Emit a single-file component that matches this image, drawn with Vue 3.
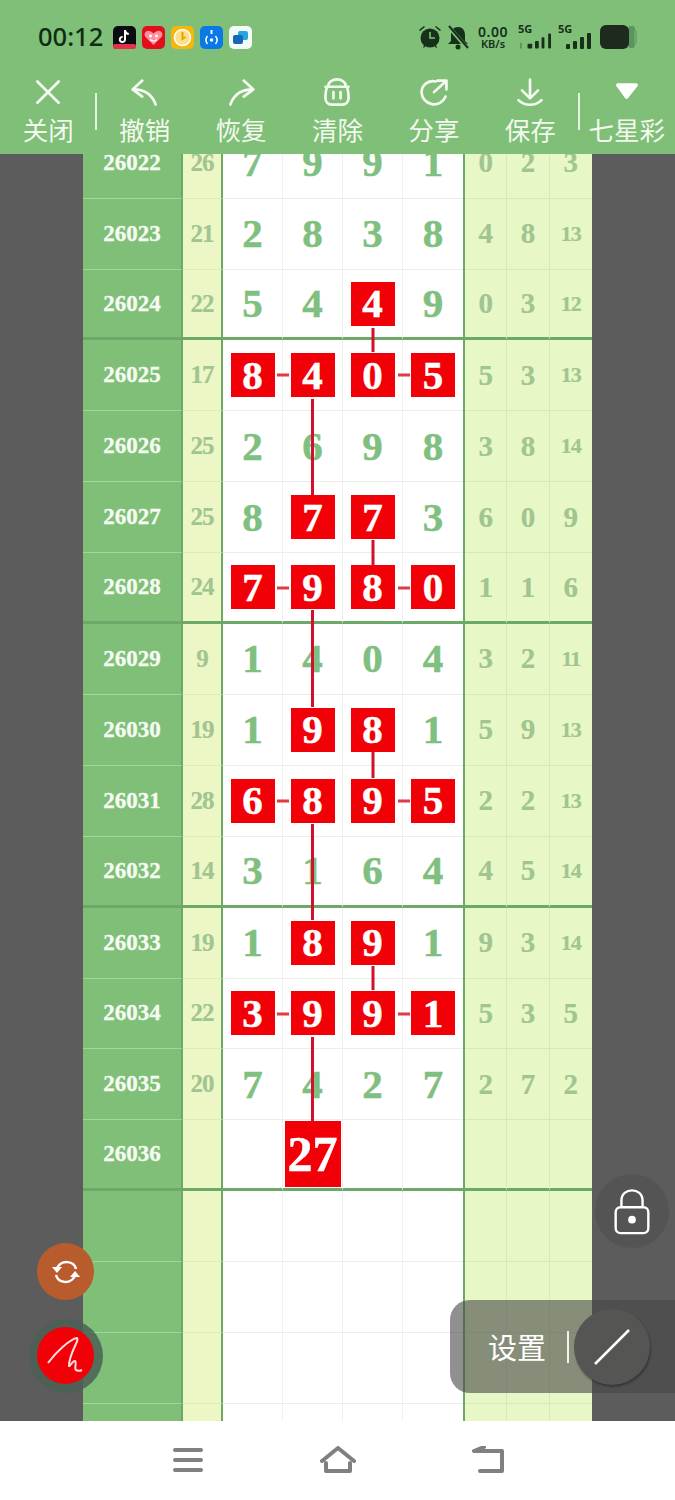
<script setup>
const R = (n) => ({ n, red: true })
const rows = [
  { id: 26022, sum: 26, d: [7, 9, 9, 1], r: [0, 2, 3] },
  { id: 26023, sum: 21, d: [2, 8, 3, 8], r: [4, 8, 13] },
  { id: 26024, sum: 22, d: [5, 4, R(4), 9], r: [0, 3, 12], thick: true },
  { id: 26025, sum: 17, d: [R(8), R(4), R(0), R(5)], r: [5, 3, 13] },
  { id: 26026, sum: 25, d: [2, 6, 9, 8], r: [3, 8, 14] },
  { id: 26027, sum: 25, d: [8, R(7), R(7), 3], r: [6, 0, 9] },
  { id: 26028, sum: 24, d: [R(7), R(9), R(8), R(0)], r: [1, 1, 6], thick: true },
  { id: 26029, sum: 9, d: [1, 4, 0, 4], r: [3, 2, 11] },
  { id: 26030, sum: 19, d: [1, R(9), R(8), 1], r: [5, 9, 13] },
  { id: 26031, sum: 28, d: [R(6), R(8), R(9), R(5)], r: [2, 2, 13] },
  { id: 26032, sum: 14, d: [3, 1, 6, 4], r: [4, 5, 14], thick: true },
  { id: 26033, sum: 19, d: [1, R(8), R(9), 1], r: [9, 3, 14] },
  { id: 26034, sum: 22, d: [R(3), R(9), R(9), R(1)], r: [5, 3, 5] },
  { id: 26035, sum: 20, d: [7, 4, 2, 7], r: [2, 7, 2] },
  { id: 26036, sum: '', d: ['', { n: 27, big: true }, '', ''], r: ['', '', ''], thick: true },
  { id: '', sum: '', d: ['', '', '', ''], r: ['', '', ''] },
  { id: '', sum: '', d: ['', '', '', ''], r: ['', '', ''] },
  { id: '', sum: '', d: ['', '', '', ''], r: ['', '', ''] },
  { id: '', sum: '', d: ['', '', '', ''], r: ['', '', ''] },
]
const isObj = (v) => typeof v === 'object' && v !== null
const val = (v) => (isObj(v) ? v.n : v)
const tools = ['关闭', '撤销', '恢复', '清除', '分享', '保存', '七星彩']
</script>

<template>
  <div class="page">
    <header class="head">
      <div class="status">
        <span class="time">00:12</span>
        <div class="apps">
          <svg width="23" height="23" viewBox="0 0 23 23"><rect width="23" height="23" rx="5" fill="#0b0b12"/><rect y="18" width="23" height="5" rx="2" fill="#e8304a"/><path d="M12 4v9.500a2.600 2.600 0 1 1-2.400-2.600M12 4.500c.4 2 1.800 3.300 3.800 3.500" fill="none" stroke="#fff" stroke-width="2"/></svg>
          <svg width="23" height="23" viewBox="0 0 23 23"><rect width="23" height="23" rx="5" fill="#e30d1b"/><path d="M11.500 19 3.500 11c-2.500-3 .5-7 4-6 1.800.5 3 1.500 4 2.500 1-1 2.200-2 4-2.500 3.500-1 6.500 3 4 6z" fill="#ff8d9c"/><circle cx="8.500" cy="10" r="1.500" fill="#fff"/><circle cx="14.500" cy="10" r="1.500" fill="#fff"/><path d="M8 13.500c2 2 5 2 7 0" stroke="#fff" stroke-width="1.500" fill="none"/></svg>
          <svg width="23" height="23" viewBox="0 0 23 23"><rect width="23" height="23" rx="5" fill="#f6b60e"/><circle cx="11.500" cy="11.500" r="8" fill="#fbe08a" stroke="#fff" stroke-width="1.500"/><path d="M11.500 6v7l3-2" stroke="#e9a400" stroke-width="2" fill="none"/></svg>
          <svg width="23" height="23" viewBox="0 0 23 23"><rect width="23" height="23" rx="5" fill="#0a78e6"/><path d="M11.500 4v4" stroke="#fff" stroke-width="2"/><circle cx="11.500" cy="14" r="1.800" fill="#fff"/><path d="M7.500 10c-2 2.500-2 5.500 0 8M15.500 10c2 2.500 2 5.500 0 8" stroke="#fff" stroke-width="1.500" fill="none"/></svg>
          <svg width="23" height="23" viewBox="0 0 23 23"><rect width="23" height="23" rx="5" fill="#f2fbf7"/><rect x="9" y="5" width="10" height="9" rx="2" fill="#25a6df"/><rect x="4" y="9" width="10" height="9" rx="2" fill="#1567b8"/></svg>
        </div>
        <div class="sys">
          <svg width="26" height="26" viewBox="0 0 26 26" fill="#16301a"><circle cx="13" cy="14" r="9.500"/><path d="M2 6l5-4 1 1-5 4zM24 6l-5-4-1 1 5 4z"/><path d="M13 8v6h5" stroke="#7fbf78" stroke-width="1.600" fill="none"/><path d="M6 23l2-3 1 1-2 3zM20 23l-2-3-1 1 2 3z"/></svg>
          <svg width="24" height="25" viewBox="0 0 24 25" fill="#16301a"><path d="M12 2c4.500 0 7 3.500 7 8v6l3 3H2l3-3v-6c0-4.500 2.500-8 7-8z"/><circle cx="12" cy="22" r="2.500"/><path d="M2 1l20 23" stroke="#7fbf78" stroke-width="4"/><path d="M3 1l19 22" stroke="#16301a" stroke-width="2"/></svg>
          <div class="speed"><b>0.00</b><span>KB/s</span></div>
          <div class="net">
            <b>5G</b>
            <svg width="31" height="16" viewBox="0 0 33 16" fill="#16301a"><rect x="0" y="10" width="2" height="6" opacity=".3"/><rect x="8" y="11" width="5" height="5" rx="1"/><rect x="16" y="8" width="4" height="8" rx="1"/><rect x="23" y="4" width="3" height="12" rx="1"/><rect x="30" y="0" width="3" height="16" rx="1"/></svg>
          </div>
          <div class="net net2">
            <b>5G</b>
            <svg width="26" height="16" viewBox="0 0 26 16" fill="#16301a"><rect x="0" y="11" width="4" height="5" rx="1"/><rect x="7" y="8" width="4" height="8" rx="1"/><rect x="14" y="4" width="4" height="12" rx="1"/><rect x="21" y="0" width="4" height="16" rx="1"/></svg>
          </div>
          <svg width="39" height="24" viewBox="0 0 39 24"><rect x="29" y="1" width="7" height="22" rx="3" fill="#5c9460"/><rect x="35" y="5" width="3" height="14" rx="1.500" fill="#6ea66c"/><rect x="1" y="0" width="29" height="24" rx="6" fill="#1d2a1d"/></svg>
        </div>
      </div>
      <nav class="tools">
        <div v-for="(t, i) in tools" :key="t" class="tool" :class="{ sep: i === 0 || i === 5 }">
          <svg v-if="i === 0" class="ic" viewBox="0 0 36 36"><path d="M6 5l24 24M30 5L6 29"/></svg>
          <svg v-else-if="i === 1" class="ic" viewBox="0 0 36 36"><path d="M15 4L4 14l11 8M5 14c12 0 21 6 25 17"/></svg>
          <svg v-else-if="i === 2" class="ic" viewBox="0 0 36 36"><path d="M21 4l11 10-11 8M31 14C19 14 10 20 6 31"/></svg>
          <svg v-else-if="i === 3" class="ic" viewBox="0 0 36 36"><path d="M8 11c0-11 20-11 20 0M5 11h26M7 11c-2 4-2 10-2 13 0 4 3 7 7 7h12c4 0 7-3 7-7 0-3 0-9-2-13M14 17v7M22 17v7"/></svg>
          <svg v-else-if="i === 4" class="ic" viewBox="0 0 36 36"><path d="M20 5C10 3 4 11 4 17a14 14 0 0 0 27 5M18 17L31 5M22 4h10v10"/></svg>
          <svg v-else-if="i === 5" class="ic" viewBox="0 0 36 36"><path d="M18 3v20M9 15l9 9 9-9M5 26c7 7 19 7 26 0"/></svg>
          <svg v-else class="ic" viewBox="0 0 36 36"><path class="fill" d="M8 7h20c2 0 3 2 2 3L19 24c-1 1-2 1-3 0L6 10c-1-1 0-3 2-3z"/></svg>
          <span>{{ t }}</span>
        </div>
      </nav>
    </header>

    <main class="main">
      <div class="table">
        <div v-for="(row, ri) in rows" :key="ri" class="row" :class="{ thick: row.thick }">
          <div class="c-date">{{ row.id }}</div>
          <div class="c-sum">{{ row.sum }}</div>
          <div class="c-digits">
            <div v-for="(v, di) in row.d" :key="di" class="digit">
              <span :class="{ box: isObj(v) && v.red, big: isObj(v) && v.big }">{{ val(v) }}</span>
            </div>
          </div>
          <div class="c-right">
            <div v-for="(v, di) in row.r" :key="di" class="rcell" :class="{ two: v >= 10 }">{{ v }}</div>
          </div>
        </div>
      </div>
    </main>

    <svg class="links" width="675" height="1500" viewBox="0 0 675 1500">
      <path d="M373 328v24M312.500 399v96M373 540v25M312.500 610v97M373 752v26M312.500 824v96M373 966v24M312.500 1037v85" />
      <path d="M277 375h12M398 375h12M277 588h12M398 588h12M277 801h12M398 801h12M277 1014h12M398 1014h12" />
    </svg>

    <footer class="nav">
      <svg width="30" height="26" viewBox="0 0 30 26"><path d="M2 3h26M2 13h26M2 23h26"/></svg>
      <svg width="36" height="28" viewBox="0 0 36 28"><path d="M2 15L18 2l16 13M6 17v8h24v-8"/></svg>
      <svg width="32" height="28" viewBox="0 0 32 28"><path d="M12 1L2 5h28v20H8"/></svg>
    </footer>

    <div class="fab lock">
      <svg width="38" height="48" viewBox="0 0 38 48"><path d="M8 18v-6c0-14 22-14 22 0v6" fill="none" stroke="#fff" stroke-width="2.500"/><rect x="2" y="19" width="34" height="27" rx="5" fill="none" stroke="#fff" stroke-width="2.500"/><circle cx="19" cy="32" r="4" fill="#fff"/></svg>
    </div>
    <div class="setting">
      <span class="s-txt">设置</span>
      <i class="s-bar"></i>
      <div class="s-round">
        <svg width="38" height="38" viewBox="0 0 38 38"><path d="M2 36L36 2" stroke="#fff" stroke-width="2.500"/></svg>
      </div>
    </div>
    <div class="fab sync">
      <svg width="30" height="28" viewBox="0 0 30 28" fill="none" stroke="#fff" stroke-width="2.500"><path d="M25 11C23 3 11 1 6 10M5 17c2 8 14 10 19 1"/><path d="M1 9l5 6 5-6z" fill="#fff" stroke="none"/><path d="M19 19l5-6 5 6z" fill="#fff" stroke="none"/></svg>
    </div>
    <div class="pen-ring">
      <div class="pen">
        <svg width="38" height="38" viewBox="0 0 38 38" fill="none" stroke="#ffdcdc" stroke-width="2"><path d="M2 27C10 16 24 3 31 2c3 2-8 15-8 28 1 1 4-6 6-5 2 1-1 8 1 9 2 1 4 1 6 0"/></svg>
      </div>
    </div>
  </div>
</template>

<style scoped>
.page {
  position: relative;
  width: 675px;
  height: 1500px;
  overflow: hidden;
  display: flex;
  flex-direction: column;
  background: #fff;
}
.head {
  height: 154px;
  flex: none;
  background: #7fbf78;
  display: flex;
  flex-direction: column;
}
.status {
  height: 71px;
  display: flex;
  align-items: center;
  padding: 3px 37px 0 38px;
  box-sizing: border-box;
  color: #12301a;
}
.time {
  font: 500 25.500px/1 "Noto Sans", sans-serif;
  width: 75px;
  flex: none;
  color: #0f2c14;
}
.apps {
  display: flex;
  gap: 6px;
}
.sys {
  margin-left: auto;
  display: flex;
  align-items: center;
  gap: 3px;
}
.speed {
  display: flex;
  flex-direction: column;
  align-items: center;
  margin: 0 7px 0 5px;
  font-family: "Noto Sans", sans-serif;
  color: #16301a;
}
.speed b {
  font-size: 14px;
  line-height: 13px;
  font-weight: 600;
  letter-spacing: .5px;
}
.speed span {
  font-size: 11px;
  line-height: 12px;
  font-weight: 600;
}
.net {
  position: relative;
  width: 33px;
  height: 24px;
  display: flex;
  align-items: flex-end;
  justify-content: flex-end;
  margin-right: 4px;
}
.net b {
  position: absolute;
  left: 0;
  top: -2px;
  font: 700 11px/1 "Noto Sans", sans-serif;
  color: #16301a;
}
.net2 {
  width: 34px;
}
.tools {
  height: 83px;
  display: grid;
  grid-template-columns: repeat(7, 1fr);
}
.tool {
  position: relative;
  display: flex;
  flex-direction: column;
  align-items: center;
  color: #f3f9ee;
  font: 400 25.500px/1 "Noto Sans CJK SC", sans-serif;
}
.tool.sep::after {
  content: "";
  position: absolute;
  right: -1px;
  top: 22px;
  width: 2px;
  height: 37px;
  background: #e6f3df;
}
.ic {
  width: 32px;
  height: 32px;
  margin-top: 6px;
  margin-bottom: 7px;
  fill: none;
  stroke: #f5faf1;
  stroke-width: 3;
  stroke-linecap: round;
  stroke-linejoin: round;
}
.ic .fill {
  fill: #fff;
  stroke: none;
}
.main {
  height: 1267px;
  flex: none;
  overflow: hidden;
  background: #5c5c5c;
}
.table {
  margin: -26.200px 0 0 83px;
  width: 509px;
}
.row {
  display: grid;
  grid-template-columns: 100px 40px 242px 127px;
  height: 70.900px;
  font-family: "Liberation Serif", serif;
  font-weight: 700;
}
.row > div {
  box-sizing: border-box;
}
.c-date {
  background: #7fbf78;
  color: #f6fbf2;
  font-size: 23px;
  -webkit-text-stroke: .3px #f6fbf2;
  display: flex;
  align-items: center;
  justify-content: center;
  border-right: 2px solid #6ca867;
  border-bottom: 1px solid #a5d49c;
}
.c-sum {
  background: #edf7c6;
  color: #a0c590;
  font-size: 25px;
  letter-spacing: -1px;
  -webkit-text-stroke: .2px #a0c590;
  display: flex;
  align-items: center;
  justify-content: center;
  border-right: 2px solid #6ca867;
  border-bottom: 1px solid #dcebb8;
}
.c-digits {
  background: #fff;
  display: grid;
  grid-template-columns: repeat(4, 1fr);
  border-right: 2px solid #6ca867;
}
.digit {
  box-sizing: border-box;
  display: flex;
  align-items: center;
  justify-content: center;
  color: #7fbf7f;
  font-size: 41px;
  line-height: 1;
  -webkit-text-stroke: .5px currentColor;
  border-right: 1px solid #f0f0f0;
  border-bottom: 1px solid #ececec;
}
.digit:last-child {
  border-right: 0;
}
.box {
  width: 44px;
  height: 44px;
  display: flex;
  align-items: center;
  justify-content: center;
  background: #f20007;
  color: #fff;
}
.big {
  width: 56px;
  height: 66px;
  display: flex;
  align-items: center;
  justify-content: center;
  background: #f20007;
  color: #fff;
  font-size: 50px;
}
.c-right {
  background: #e7f7c6;
  display: grid;
  grid-template-columns: repeat(3, 1fr);
}
.rcell {
  box-sizing: border-box;
  display: flex;
  align-items: center;
  justify-content: center;
  color: #a0c590;
  font-size: 29px;
  -webkit-text-stroke: .2px #a0c590;
  border-right: 1px solid #d8e8ba;
  border-bottom: 1px solid #d8e8ba;
}
.rcell:last-child {
  border-right: 0;
}
.rcell.two {
  font-size: 22px;
  letter-spacing: -1px;
}
.thick .c-date,
.thick .c-sum,
.thick .digit,
.thick .rcell {
  border-bottom: 3px solid #6ca867;
}
.links {
  position: absolute;
  left: 0;
  top: 0;
  pointer-events: none;
  fill: none;
  stroke: #d3102c;
  stroke-width: 3;
}
.links path + path {
  stroke: #e03a42;
}
.nav {
  flex: 1;
  background: #fff;
  display: grid;
  grid-template-columns: 150px 150px 150px;
  justify-content: center;
  justify-items: center;
  align-items: center;
  padding-bottom: 2px;
}
.nav svg {
  fill: none;
  stroke: #808080;
  stroke-width: 4;
  stroke-linecap: round;
  stroke-linejoin: round;
}
.fab {
  position: absolute;
  display: flex;
  align-items: center;
  justify-content: center;
  border-radius: 50%;
}
.lock {
  left: 595px;
  top: 1174px;
  width: 74px;
  height: 74px;
  background: #545454;
}
.lock svg {
  margin-top: 2px;
  transform: scale(.96);
}
.setting {
  position: absolute;
  left: 450px;
  top: 1300px;
  width: 225px;
  height: 93px;
  border-radius: 20px 0 0 20px;
  background: rgba(70, 70, 70, .6);
  display: flex;
  align-items: center;
  box-sizing: border-box;
  padding-left: 38px;
  color: #fff;
}
.s-txt {
  font: 400 29px/1 "Noto Sans CJK SC", sans-serif;
}
.s-bar {
  width: 2px;
  height: 32px;
  background: #f2f2ea;
  margin-left: 21px;
}
.s-round {
  position: absolute;
  left: 124px;
  top: 9px;
  width: 76px;
  height: 76px;
  border-radius: 50%;
  background: #555653;
  box-shadow: 1px 2px 2px rgba(40, 40, 40, .6);
  display: flex;
  align-items: center;
  justify-content: center;
}
.sync {
  left: 37px;
  top: 1243px;
  width: 57px;
  height: 57px;
  background: #b95c2d;
}
.pen-ring {
  position: absolute;
  left: 29px;
  top: 1319px;
  width: 74px;
  height: 74px;
  border-radius: 50%;
  background: rgba(75, 95, 85, .85);
  display: flex;
  align-items: center;
  justify-content: center;
}
.pen {
  width: 57px;
  height: 57px;
  margin: -2px 0 0 -2px;
  border-radius: 50%;
  background: #f20007;
  display: flex;
  align-items: center;
  justify-content: center;
}
</style>
